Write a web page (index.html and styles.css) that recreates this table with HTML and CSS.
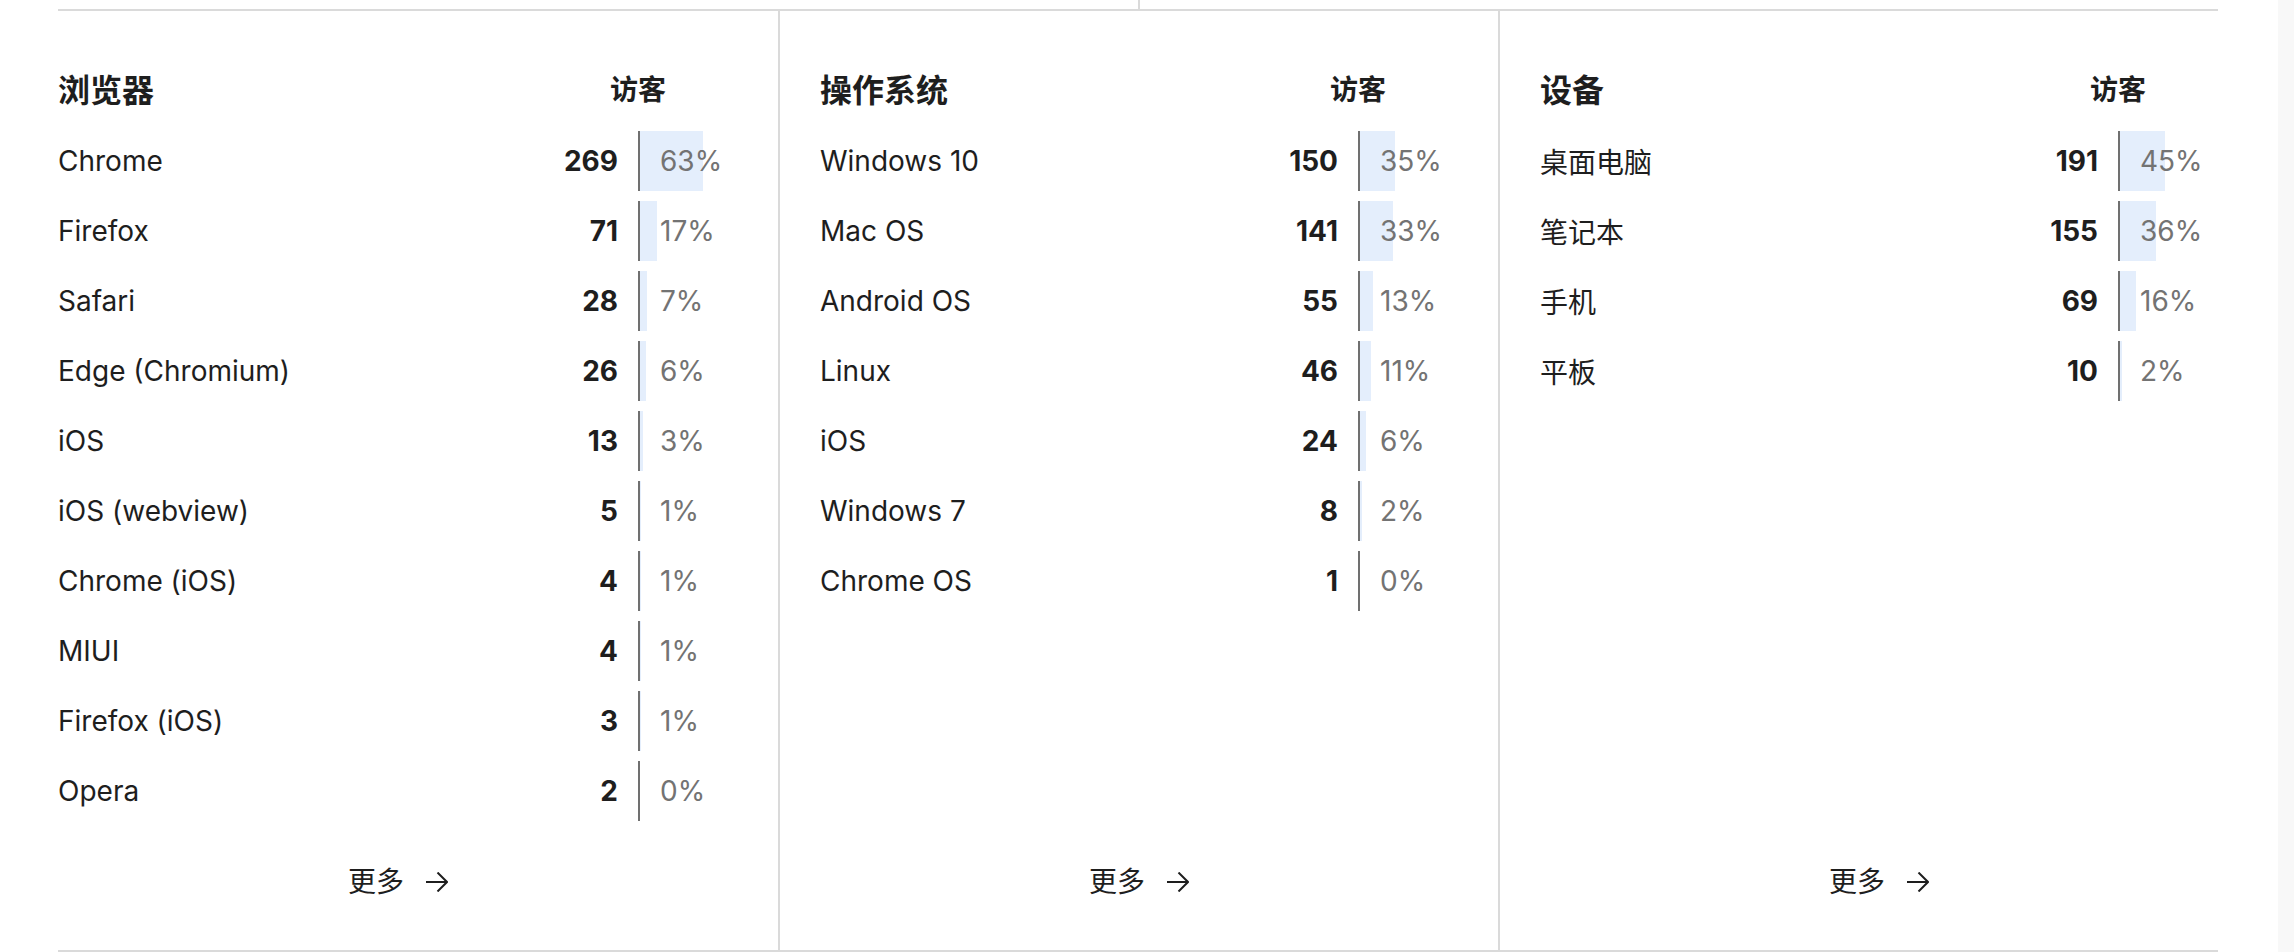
FILE: index.html
```html
<!DOCTYPE html>
<html lang="zh-CN">
<head>
<meta charset="utf-8">
<title>统计</title>
<link rel="stylesheet" href="styles.css">
</head>
<body>
<div class="page">
  <main class="main">
    <div class="prev"><div></div><div class="prev-right"></div></div>
    <section class="stats">
      <div class="panel">
        <div class="header"><div class="title">浏览器</div><div class="metric">访客</div></div>
        <div class="list">
          <div class="row"><div class="label">Chrome</div><div class="value">269</div><div class="percent"><div class="bar" style="width:63px"></div>63%</div></div>
          <div class="row"><div class="label">Firefox</div><div class="value">71</div><div class="percent"><div class="bar" style="width:17px"></div>17%</div></div>
          <div class="row"><div class="label">Safari</div><div class="value">28</div><div class="percent"><div class="bar" style="width:7px"></div>7%</div></div>
          <div class="row"><div class="label">Edge (Chromium)</div><div class="value">26</div><div class="percent"><div class="bar" style="width:6px"></div>6%</div></div>
          <div class="row"><div class="label">iOS</div><div class="value">13</div><div class="percent"><div class="bar" style="width:3px"></div>3%</div></div>
          <div class="row"><div class="label">iOS (webview)</div><div class="value">5</div><div class="percent"><div class="bar" style="width:1px"></div>1%</div></div>
          <div class="row"><div class="label">Chrome (iOS)</div><div class="value">4</div><div class="percent"><div class="bar" style="width:1px"></div>1%</div></div>
          <div class="row"><div class="label">MIUI</div><div class="value">4</div><div class="percent"><div class="bar" style="width:1px"></div>1%</div></div>
          <div class="row"><div class="label">Firefox (iOS)</div><div class="value">3</div><div class="percent"><div class="bar" style="width:1px"></div>1%</div></div>
          <div class="row"><div class="label">Opera</div><div class="value">2</div><div class="percent"><div class="bar" style="width:0px"></div>0%</div></div>
        </div>
        <div class="more"><span>更多</span><svg class="arrow" width="22" height="20" viewBox="0 0 22 20"><path d="M0 10H21M11.5 0.5L21 10L11.5 19.5" fill="none" stroke="currentColor" stroke-width="2"/></svg></div>
      </div>
      <div class="panel">
        <div class="header"><div class="title">操作系统</div><div class="metric">访客</div></div>
        <div class="list">
          <div class="row"><div class="label">Windows 10</div><div class="value">150</div><div class="percent"><div class="bar" style="width:35px"></div>35%</div></div>
          <div class="row"><div class="label">Mac OS</div><div class="value">141</div><div class="percent"><div class="bar" style="width:33px"></div>33%</div></div>
          <div class="row"><div class="label">Android OS</div><div class="value">55</div><div class="percent"><div class="bar" style="width:13px"></div>13%</div></div>
          <div class="row"><div class="label">Linux</div><div class="value">46</div><div class="percent"><div class="bar" style="width:11px"></div>11%</div></div>
          <div class="row"><div class="label">iOS</div><div class="value">24</div><div class="percent"><div class="bar" style="width:6px"></div>6%</div></div>
          <div class="row"><div class="label">Windows 7</div><div class="value">8</div><div class="percent"><div class="bar" style="width:2px"></div>2%</div></div>
          <div class="row"><div class="label">Chrome OS</div><div class="value">1</div><div class="percent"><div class="bar" style="width:0px"></div>0%</div></div>
        </div>
        <div class="more"><span>更多</span><svg class="arrow" width="22" height="20" viewBox="0 0 22 20"><path d="M0 10H21M11.5 0.5L21 10L11.5 19.5" fill="none" stroke="currentColor" stroke-width="2"/></svg></div>
      </div>
      <div class="panel">
        <div class="header"><div class="title">设备</div><div class="metric">访客</div></div>
        <div class="list">
          <div class="row"><div class="label">桌面电脑</div><div class="value">191</div><div class="percent"><div class="bar" style="width:45px"></div>45%</div></div>
          <div class="row"><div class="label">笔记本</div><div class="value">155</div><div class="percent"><div class="bar" style="width:36px"></div>36%</div></div>
          <div class="row"><div class="label">手机</div><div class="value">69</div><div class="percent"><div class="bar" style="width:16px"></div>16%</div></div>
          <div class="row"><div class="label">平板</div><div class="value">10</div><div class="percent"><div class="bar" style="width:2px"></div>2%</div></div>
        </div>
        <div class="more"><span>更多</span><svg class="arrow" width="22" height="20" viewBox="0 0 22 20"><path d="M0 10H21M11.5 0.5L21 10L11.5 19.5" fill="none" stroke="currentColor" stroke-width="2"/></svg></div>
      </div>
    </section>
  </main>
  <div class="scrollbar"></div>
</div>
</body>
</html>
```
FILE: styles.css
```css
html, body {
  margin: 0;
  padding: 0;
  background: #fff;
}
body {
  font-family: Inter, "Noto Sans CJK SC", sans-serif;
  color: #1e1e1e;
}
.page {
  display: flex;
  height: 952px;
  overflow: hidden;
}
.main {
  flex: 1;
}
.prev {
  display: grid;
  grid-template-columns: 1fr 1fr;
  width: 2160px;
  height: 9px;
  margin-left: 58px;
}
.prev-right {
  border-left: 2px solid #dadada;
}
.stats {
  display: grid;
  grid-template-columns: repeat(3, 1fr);
  width: 2160px;
  margin-left: 58px;
  border-top: 2px solid #dadada;
  border-bottom: 2px solid #dadada;
}
.panel {
  display: flex;
  flex-direction: column;
  padding: 47px 40px 40px;
  min-width: 0;
}
.panel:first-child {
  padding-left: 0;
}
.panel:last-child {
  padding-right: 0;
}
.panel + .panel {
  border-left: 2px solid #dadada;
}
.header {
  display: flex;
  align-items: center;
  height: 60px;
  margin-bottom: 13px;
  font-weight: 700;
}
.title {
  flex: 1;
  font-size: 32px;
}
.metric {
  width: 200px;
  text-align: center;
  font-size: 28px;
}
.list {
  flex: 1;
}
.row {
  display: flex;
  align-items: center;
  height: 60px;
  margin-bottom: 10px;
  font-size: 28px;
}
.label {
  flex: 1;
  white-space: nowrap;
}
.value {
  width: 100px;
  margin-right: 20px;
  text-align: right;
  font-weight: 700;
}
.percent {
  position: relative;
  z-index: 1;
  box-sizing: border-box;
  display: flex;
  align-items: center;
  width: 100px;
  height: 60px;
  padding-left: 20px;
  border-left: 2px solid #707070;
  color: #737373;
}
.bar {
  position: absolute;
  left: 0;
  top: 0;
  height: 60px;
  background: #e4eefc;
  z-index: -1;
}
.more {
  display: flex;
  justify-content: center;
  align-items: center;
  gap: 22px;
  height: 60px;
  margin-top: 19px;
  font-size: 28px;
  color: #1e1e1e;
}
.arrow {
  display: block;
  margin-top: 4px;
}
.scrollbar {
  width: 16px;
  flex: none;
  background: #f8f8f8;
}
```
